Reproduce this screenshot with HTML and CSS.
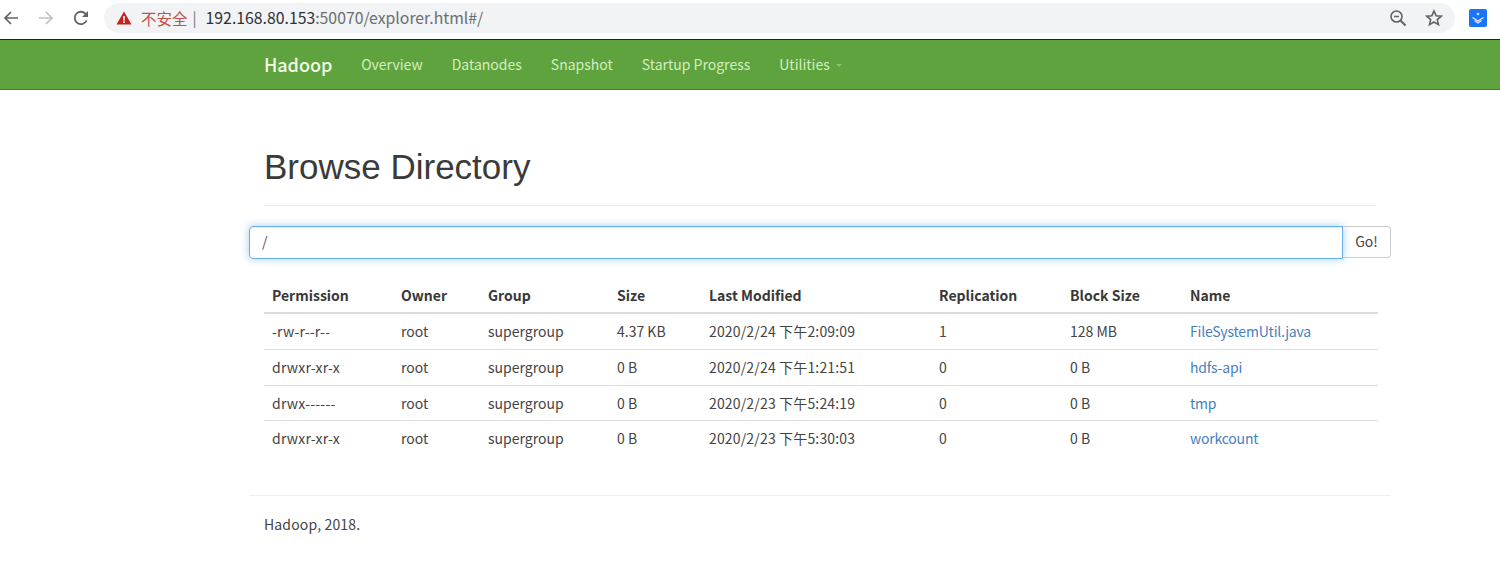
FILE: index.html
```html
<!DOCTYPE html>
<html lang="zh">
<head>
<meta charset="utf-8">
<title>Browsing HDFS</title>
<link rel="stylesheet" href="styles.css">
</head>
<body>
<header class="chrome">
  <svg class="ic ic-back" width="18" height="18" viewBox="0 0 18 18"><path d="M16 9H3M9 3L3 9l6 6" fill="none" stroke="#5f6368" stroke-width="1.7"/></svg>
  <svg class="ic ic-fwd" width="18" height="18" viewBox="0 0 18 18"><path d="M2 9h13M9 3l6 6-6 6" fill="none" stroke="#bfc1c4" stroke-width="1.7"/></svg>
  <svg class="ic ic-reload" width="18" height="18" viewBox="0 0 18 18"><path d="M14.6 11.5A6.2 6.2 0 1 1 13.4 4.6L15.5 6.7" fill="none" stroke="#5f6368" stroke-width="1.8"/><path d="M16 2v6h-6z" fill="#5f6368"/></svg>
  <div class="omnibox">
    <svg class="warn" width="16" height="14" viewBox="0 0 16 14"><path d="M8 0.5L15.5 13.5H0.5z" fill="#c5221f"/><path d="M7.2 5h1.6v4.4H7.2zM7.2 10.3h1.6v1.6H7.2z" fill="#fff"/></svg>
    <span class="insecure">不安全</span>
    <span class="sep">|</span>
    <span class="url"><span class="host">192.168.80.153</span>:50070/explorer.html#/</span>
    <span class="spacer"></span>
    <svg class="zoom" width="18" height="18" viewBox="0 0 18 18"><circle cx="7.5" cy="7.5" r="5.5" fill="none" stroke="#5f6368" stroke-width="1.6"/><path d="M5 7.5h5" stroke="#5f6368" stroke-width="1.5"/><path d="M11.5 11.5L16.5 16.5" stroke="#5f6368" stroke-width="1.9"/></svg>
    <svg class="star" width="18" height="18" viewBox="0 0 18 18"><path d="M9 2l2.1 4.7 5.1.5-3.9 3.4 1.2 5L9 13l-4.5 2.6 1.2-5-3.9-3.4 5.1-.5z" fill="none" stroke="#5f6368" stroke-width="1.6"/></svg>
  </div>
  <svg class="ext" width="18" height="18" viewBox="0 0 18 18"><rect width="18" height="18" rx="2" fill="#1a73f8"/><path d="M3.500 8.500L9 12l5.500-3.500M5.500 11.500L9 14l3.500-2.500" fill="none" stroke="#dbe9ff" stroke-width="1.300"/><circle cx="9" cy="5" r="1.300" fill="#cfe2ff"/></svg>
</header>

<nav class="navbar">
  <div class="nav-inner">
    <a class="brand">Hadoop</a>
    <a class="nav-link">Overview</a>
    <a class="nav-link">Datanodes</a>
    <a class="nav-link">Snapshot</a>
    <a class="nav-link">Startup Progress</a>
    <a class="nav-link">Utilities <span class="caret"></span></a>
  </div>
</nav>

<main class="container">
  <div class="page-header"><h1>Browse Directory</h1></div>
  <div class="input-group">
    <div class="path-input">/</div>
    <div class="go-btn">Go!</div>
  </div>
  <table class="listing">
    <colgroup>
      <col class="c1"><col class="c2"><col class="c3"><col class="c4"><col class="c5"><col class="c6"><col class="c7"><col class="c8">
    </colgroup>
    <thead>
      <tr><th>Permission</th><th>Owner</th><th>Group</th><th>Size</th><th>Last Modified</th><th>Replication</th><th>Block Size</th><th>Name</th></tr>
    </thead>
    <tbody>
      <tr><td class="perm">-rw-r--r--</td><td>root</td><td>supergroup</td><td>4.37 KB</td><td class="date">2020/2/24 下午2:09:09</td><td>1</td><td>128 MB</td><td><a>FileSystemUtil.java</a></td></tr>
      <tr><td class="perm">drwxr-xr-x</td><td>root</td><td>supergroup</td><td>0 B</td><td class="date">2020/2/24 下午1:21:51</td><td>0</td><td>0 B</td><td><a>hdfs-api</a></td></tr>
      <tr><td class="perm">drwx------</td><td>root</td><td>supergroup</td><td>0 B</td><td class="date">2020/2/23 下午5:24:19</td><td>0</td><td>0 B</td><td><a>tmp</a></td></tr>
      <tr><td class="perm">drwxr-xr-x</td><td>root</td><td>supergroup</td><td>0 B</td><td class="date">2020/2/23 下午5:30:03</td><td>0</td><td>0 B</td><td><a>workcount</a></td></tr>
    </tbody>
  </table>
  <footer class="footer">Hadoop, 2018.</footer>
</main>
</body>
</html>
```
FILE: styles.css
```css
* { box-sizing: border-box; }
html, body { margin: 0; padding: 0; }
body {
  width: 1500px;
  height: 588px;
  overflow: hidden;
  background: #fff;
  color: #333;
  font-family: "Noto Sans CJK SC", "Noto Sans", sans-serif;
  font-size: 14px;
}
.chrome {
  height: 40px;
  display: flex;
  align-items: center;
  background: #fff;
  border-bottom: 1px solid #222;
  padding-bottom: 4px;
}
.ic-back { margin-left: 2px; }
.ic-fwd { margin-left: 17px; }
.ic-reload { margin-left: 17px; }
.omnibox {
  margin-left: 14px;
  width: 1351px;
  height: 30px;
  border-radius: 15px;
  background: #f1f3f4;
  display: flex;
  align-items: center;
  padding-left: 12px;
  padding-right: 12px;
}
.insecure { margin-left: 9px; color: #c5504a; font-size: 15.500px; line-height: 20px; }
.sep { margin-left: 5px; color: #777; font-size: 15px; }
.url { margin-left: 9px; color: #6b6e72; font-size: 15.800px; line-height: 20px; }
.host { color: #303134; }
.spacer { flex: 1; }
.star { margin-left: 18px; }
.ext { margin-left: 14px; }
.navbar {
  height: 50px;
  background: #5fa33e;
  border-bottom: 1px solid #4a7a35;
}
.nav-inner {
  display: flex;
  align-items: center;
  height: 47px;
  padding-left: 264px;
}
.brand { color: #f2fbe9; font-size: 18px; font-weight: 500; margin-right: 29px; letter-spacing: -.05px; }
.nav-link { color: #d4eec0; font-size: 14px; margin-right: 29px; }
.caret {
  display: inline-block;
  width: 0;
  height: 0;
  margin-left: 3px;
  vertical-align: middle;
  border-top: 3px solid #8fc074;
  border-left: 3px solid transparent;
  border-right: 3px solid transparent;
}
.container {
  width: 1142px;
  margin-left: 249px;
}
.page-header {
  margin: 0 15px;
  height: 116px;
  border-bottom: 1px solid #eee;
  padding-top: 55px;
}
h1 {
  margin: 0;
  font-family: "Liberation Sans", Arial, sans-serif;
  font-size: 35px;
  font-weight: 400;
  line-height: 44px;
  color: #3a3a3a;
}
.input-group {
  display: flex;
  margin-top: 20px;
  height: 33px;
}
.path-input {
  flex: 1;
  border: 1px solid #66afe9;
  border-radius: 4px 0 0 4px;
  box-shadow: inset 0 1px 1px rgba(0,0,0,.075), 0 0 8px rgba(102,175,233,.6);
  padding: 0 12px;
  line-height: 28px;
  color: #555;
}
.go-btn {
  width: 48px;
  height: 32px;
  border: 1px solid #ccc;
  border-left: 0;
  border-radius: 0 4px 4px 0;
  text-align: center;
  line-height: 29px;
  color: #444;
}
.listing {
  border-collapse: collapse;
  table-layout: fixed;
  width: 1114px;
  margin: 18px 0 0 15px;
}
.c1 { width: 129px; }
.c2 { width: 87px; }
.c3 { width: 129px; }
.c4 { width: 92px; }
.c5 { width: 230px; }
.c6 { width: 131px; }
.c7 { width: 120px; }
.c8 { width: 196px; }
th, td {
  text-align: left;
  padding: 0 8px;
  white-space: nowrap;
  line-height: 20px;
}
th {
  height: 36px;
  font-weight: 700;
  border-bottom: 2px solid #ddd;
  color: #383838;
}
td {
  height: 36px;
  border-bottom: 1px solid #ddd;
  color: #444;
}
tbody tr:nth-child(2) td { padding-bottom: 1px; }
tbody tr:nth-child(3) td { height: 35px; }
tbody tr:nth-child(4) td { padding-bottom: 1px; border-bottom: 0; }
td.perm { letter-spacing: .2px; }
td.date { letter-spacing: .16px; }
td a { color: #4482bd; letter-spacing: -.2px; }
.footer {
  margin-top: 39px;
  border-top: 1px solid #eee;
  padding: 18px 15px 0;
  color: #444;
  letter-spacing: .15px;
}
```
